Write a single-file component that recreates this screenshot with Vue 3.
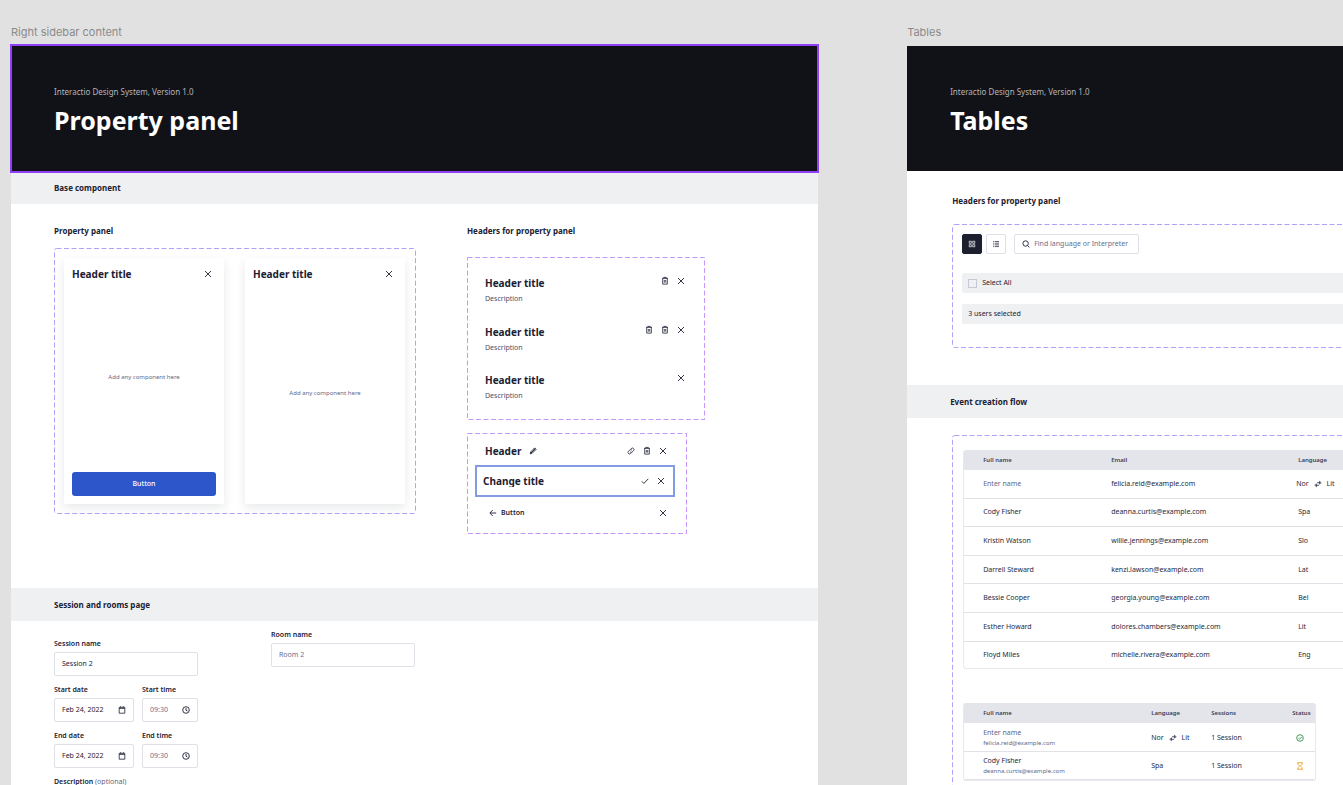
<script setup>
import { h } from 'vue'

const paths = {
  close: 'M3 3l6 6M9 3l-6 6',
  trash: 'M3 3.4h6M4.7 3.2v-.8h2.6v.8M3.7 3.6v5.5h4.6V3.6M5.3 5v2.6M6.7 5v2.6',
  pencil: 'M3.2 8.8l.5-1.9 4-4 1.4 1.4-4 4zM6.9 3.7l1.4 1.4M4 8l3.5-3.5',
  link: 'M5.5 4.3l.8-.8a1.55 1.55 0 0 1 2.2 2.2L7.3 6.9a1.55 1.55 0 0 1-2.2 0M6.5 7.7l-.8.8a1.55 1.55 0 0 1-2.2-2.2l1.2-1.2a1.55 1.55 0 0 1 2.2 0',
  check: 'M2.8 6.3l2.1 2.1 4.4-4.6',
  back: 'M9.2 6H3M5.8 3L2.8 6l3 3',
  calendar: 'M3.2 3.3h5.6v5.9H3.2zM3.2 4.4h5.6M4.6 2.2v1.2M7.4 2.2v1.2',
  clock: 'M6 2.7a3.3 3.3 0 1 0 0 6.6 3.3 3.3 0 0 0 0-6.6M6 4v2.2l1.5.8',
  grid: 'M3.2 3.2h2.1v2.1H3.2zM6.7 3.2h2.1v2.1H6.7zM3.2 6.7h2.1v2.1H3.2zM6.7 6.7h2.1v2.1H6.7z',
  list: 'M3 3.5h.9M4.7 3.5H9M3 5.2h.9M4.7 5.2H9M3 6.9h.9M4.7 6.9H9M3 8.6h.9M4.7 8.6H9',
  search: 'M5.6 2.8a2.7 2.7 0 1 0 0 5.4 2.7 2.7 0 0 0 0-5.4M7.6 7.6l1.8 1.8',
  swap: 'M5 4.7h3.2M7.4 3.3L9.2 4.7 7.4 6.1zM7 7.3H3.8M4.6 5.9L2.8 7.3l1.8 1.4z',
  approved: 'M6 2.7a3.3 3.3 0 1 0 0 6.6 3.3 3.3 0 0 0 0-6.6M4.4 6l1.2 1.2 2.2-2.3',
  pending: 'M3 2.8h6M3 9.2h6M4 2.8v1.5L5.6 6 4 7.7v1.5M8 2.8v1.5L6.4 6 8 7.7v1.5',
}

const weights = { trash: 0.8, link: 0.8, swap: 0.7, list: 0.7, grid: 0.7, calendar: 0.8 }

const Icon = ({ name }) =>
  h('svg', {
    width: 12, height: 12, viewBox: '0 0 12 12', fill: 'none', stroke: 'currentColor',
    'stroke-width': weights[name] ?? 0.9, 'stroke-linejoin': 'round', 'aria-hidden': 'true', class: 'icon',
  }, [h('path', { d: paths[name] })])
Icon.props = ['name']

const headerVariants = [['trash', 'close'], ['trash', 'trash', 'close'], ['close']]

const people = [
  { name: 'Enter name', email: 'felicia.reid@example.com', language: 'Nor', target: 'Lit', empty: true },
  { name: 'Cody Fisher', email: 'deanna.curtis@example.com', language: 'Spa' },
  { name: 'Kristin Watson', email: 'willie.jennings@example.com', language: 'Slo' },
  { name: 'Darrell Steward', email: 'kenzi.lawson@example.com', language: 'Lat' },
  { name: 'Bessie Cooper', email: 'georgia.young@example.com', language: 'Bel' },
  { name: 'Esther Howard', email: 'dolores.chambers@example.com', language: 'Lit' },
  { name: 'Floyd Miles', email: 'michelle.rivera@example.com', language: 'Eng' },
]

const sessions = people.slice(0, 2).map((p, i) => ({ ...p, sessions: '1 Session', status: i === 0 ? 'approved' : 'pending' }))

const schedule = [
  { id: 'start', label: 'Start' },
  { id: 'end', label: 'End' },
]
</script>

<template>
  <main class="canvas">
    <section class="artboard">
      <p class="artboard-name">Right sidebar content</p>
      <div class="sheet">
        <header class="cover selected">
          <p class="cover-note">Interactio Design System, Version 1.0</p>
          <h1>Property panel</h1>
        </header>

        <h2 class="band">Base component</h2>
        <div class="base">
          <div>
            <h3>Property panel</h3>
            <div class="dashed panels">
              <svg class="dashes" aria-hidden="true"><rect rx="2" /></svg>
              <article v-for="n in 2" :key="n" class="panel">
                <div class="panel-head">
                  <h4>Header title</h4>
                  <button class="icon-button" aria-label="Close"><Icon name="close" /></button>
                </div>
                <p class="panel-body">Add any component here</p>
                <button v-if="n === 1" class="primary">Button</button>
              </article>
            </div>
          </div>

          <div>
            <h3>Headers for property panel</h3>
            <div class="dashed pink headers">
              <svg class="dashes" aria-hidden="true"><rect /></svg>
              <div v-for="(icons, i) in headerVariants" :key="i" class="header-row">
                <div>
                  <h4>Header title</h4>
                  <p class="description">Description</p>
                </div>
                <div class="actions">
                  <button v-for="(icon, k) in icons" :key="k" class="icon-button" :aria-label="icon"><Icon :name="icon" /></button>
                </div>
              </div>
            </div>

            <div class="dashed pink editing">
              <svg class="dashes" aria-hidden="true"><rect /></svg>
              <div class="edit-row first">
                <h4>Header</h4>
                <button class="icon-button" aria-label="Rename"><Icon name="pencil" /></button>
                <div class="actions">
                  <button class="icon-button" aria-label="Copy link"><Icon name="link" /></button>
                  <button class="icon-button" aria-label="Delete"><Icon name="trash" /></button>
                  <button class="icon-button" aria-label="Close"><Icon name="close" /></button>
                </div>
              </div>
              <div class="edit-row rename">
                <input aria-label="Title" value="Change title" />
                <div class="actions">
                  <button class="icon-button" aria-label="Save"><Icon name="check" /></button>
                  <button class="icon-button" aria-label="Cancel"><Icon name="close" /></button>
                </div>
              </div>
              <div class="edit-row last">
                <button class="back"><Icon name="back" />Button</button>
                <div class="actions">
                  <button class="icon-button" aria-label="Close"><Icon name="close" /></button>
                </div>
              </div>
            </div>
          </div>
        </div>

        <h2 class="band">Session and rooms page</h2>
        <div class="forms">
          <form class="session">
            <div class="field">
              <label for="session-name">Session name</label>
              <div class="box"><input id="session-name" value="Session 2" /></div>
            </div>
            <div v-for="s in schedule" :key="s.id" class="pair">
              <div class="field">
                <label :for="s.id + '-date'">{{ s.label }} date</label>
                <div class="box"><input :id="s.id + '-date'" value="Feb 24, 2022" /><Icon name="calendar" /></div>
              </div>
              <div class="field">
                <label :for="s.id + '-time'">{{ s.label }} time</label>
                <div class="box"><input :id="s.id + '-time'" placeholder="09:30" /><Icon name="clock" /></div>
              </div>
            </div>
            <div class="field">
              <label for="session-description">Description <span>(optional)</span></label>
              <div class="box"><input id="session-description" /></div>
            </div>
          </form>
          <form class="room">
            <div class="field">
              <label for="room-name">Room name</label>
              <div class="box"><input id="room-name" placeholder="Room 2" /></div>
            </div>
          </form>
        </div>
      </div>
    </section>

    <section class="artboard">
      <p class="artboard-name">Tables</p>
      <div class="sheet">
        <header class="cover">
          <p class="cover-note">Interactio Design System, Version 1.0</p>
          <h1>Tables</h1>
        </header>

        <div class="toolbar-area">
          <h3>Headers for property panel</h3>
          <div class="dashed toolbar">
            <svg class="dashes" aria-hidden="true"><rect rx="2" /></svg>
            <div class="tools">
              <button class="view active" aria-label="Grid view"><Icon name="grid" /></button>
              <button class="view" aria-label="List view"><Icon name="list" /></button>
              <div class="search">
                <Icon name="search" />
                <input aria-label="Search" placeholder="Find language or Interpreter" />
              </div>
            </div>
            <label class="strip"><input type="checkbox" />Select All</label>
            <p class="strip selected-count">3 users selected</p>
          </div>
        </div>

        <h2 class="band">Event creation flow</h2>
        <div class="tables-area">
          <div class="dashed tables">
            <svg class="dashes" aria-hidden="true"><rect rx="2" /></svg>
            <table class="people">
              <colgroup><col class="c-name" /><col class="c-email" /><col /></colgroup>
              <thead>
                <tr><th>Full name</th><th>Email</th><th>Language</th></tr>
              </thead>
              <tbody>
                <tr v-for="p in people" :key="p.email">
                  <td :class="{ muted: p.empty }">{{ p.name }}</td>
                  <td>{{ p.email }}</td>
                  <td>
                    <span v-if="p.target" class="route">{{ p.language }}<Icon name="swap" />{{ p.target }}</span>
                    <template v-else>{{ p.language }}</template>
                  </td>
                </tr>
              </tbody>
            </table>

            <table class="sessions">
              <colgroup><col class="c-person" /><col class="c-lang" /><col class="c-sessions" /><col /></colgroup>
              <thead>
                <tr><th>Full name</th><th>Language</th><th>Sessions</th><th>Status</th></tr>
              </thead>
              <tbody>
                <tr v-for="p in sessions" :key="p.email">
                  <td>
                    <div class="person" :class="{ muted: p.empty }">{{ p.name }}</div>
                    <div class="person-email">{{ p.email }}</div>
                  </td>
                  <td>
                    <span v-if="p.target" class="route">{{ p.language }}<Icon name="swap" />{{ p.target }}</span>
                    <template v-else>{{ p.language }}</template>
                  </td>
                  <td>{{ p.sessions }}</td>
                  <td><span class="status" :class="p.status"><Icon :name="p.status" /></span></td>
                </tr>
              </tbody>
            </table>
          </div>
        </div>
      </div>
    </section>
  </main>
</template>

<style>
body {
  background: #e1e1e1;
}
</style>

<style scoped>
* {
  box-sizing: border-box;
  margin: 0;
  padding: 0;
}

.canvas {
  display: flex;
  gap: 89px;
  height: 100vh;
  padding: 25px 0 0 11px;
  overflow: hidden;
  background: #e1e1e1;
  color: #1b2033;
  font-family: "Noto Sans", "Open Sans", sans-serif;
  font-size: 7px;
  line-height: 12px;
}

.icon {
  display: block;
  flex: none;
}

button,
input {
  border: 0;
  background: none;
  color: inherit;
  font: inherit;
}

.artboard {
  flex: none;
  width: 60.1vw;
}

.artboard-name {
  color: #8a8a8a;
  font-family: Inter, sans-serif;
  font-size: 11px;
  line-height: 15px;
  margin-bottom: 6px;
}

.sheet {
  min-height: 100vh;
  background: #fff;
}

.cover {
  position: relative;
  padding: 40px 43px 34px;
  background: #111217;
  color: #fff;
}

.cover.selected::after {
  content: "";
  position: absolute;
  inset: -2px -1px;
  border: 2px solid #8f3ff5;
}

.cover-note {
  color: #b4b5ba;
  font-size: 8px;
}

h1 {
  margin-top: 5px;
  font-size: 25px;
  font-weight: 700;
  line-height: 34px;
}

.band {
  padding: 11px 43px 10px;
  background: #eff0f2;
  font-size: 8px;
  font-weight: 700;
}

h3 {
  font-size: 8px;
  font-weight: 700;
}

h4 {
  font-size: 10px;
  font-weight: 700;
  line-height: 16px;
}

.dashed {
  position: relative;
}

.dashes {
  position: absolute;
  inset: 0;
  width: 100%;
  height: 100%;
  pointer-events: none;
}

.dashes rect {
  x: 0.5px;
  y: 0.5px;
  width: calc(100% - 1px);
  height: calc(100% - 1px);
  fill: none;
  stroke: #b2a1fa;
  stroke-dasharray: 5 2.5;
}

.pink .dashes rect {
  stroke: #c498fb;
}

.base {
  display: flex;
  gap: 51px;
  padding: 21px 43px 54px;
}

.panels {
  display: flex;
  gap: 21px;
  margin-top: 11px;
  padding: 10px 11px 10px 10px;
}

.panel {
  display: flex;
  flex-direction: column;
  width: 160px;
  min-height: 246px;
  background: #fff;
  box-shadow: 0 4px 10px rgba(30, 36, 60, 0.1);
}

.panel-head {
  display: flex;
  align-items: center;
  justify-content: space-between;
  padding: 8px 10px 0 8px;
}

.icon-button {
  flex: none;
  width: 12px;
  height: 12px;
}

.panel-body {
  display: flex;
  flex: 1;
  align-items: center;
  justify-content: center;
  color: #5f6788;
  font-size: 6px;
}

.primary {
  height: 24px;
  margin: 0 8px 8px;
  border-radius: 3px;
  background: #2e56cb;
  color: #fff;
  font-weight: 500;
}

.actions {
  display: flex;
  gap: 4px;
  margin-left: auto;
}

.headers {
  display: flex;
  flex-direction: column;
  justify-content: space-between;
  width: 238px;
  min-height: 163px;
  margin-top: 20px;
  padding: 18px;
}

.header-row {
  display: flex;
  align-items: flex-start;
}

.description {
  margin-top: 2px;
  color: #4a5069;
}

.editing {
  width: 220px;
  margin-top: 13px;
  padding: 10px 12px 13px 8px;
}

.edit-row {
  display: flex;
  align-items: center;
}

.edit-row.first {
  gap: 6px;
  padding: 0 6px 0 10px;
}

.rename {
  height: 32px;
  margin-top: 6px;
  padding: 0 6px;
  border: 2px solid #839be0;
}

.rename input {
  width: 100px;
  font-size: 10px;
  font-weight: 700;
}

.edit-row.last {
  margin-top: 8px;
  padding: 0 6px 0 12px;
}

.back {
  display: flex;
  align-items: center;
  gap: 2px;
  height: 16px;
  font-weight: 600;
}

.forms {
  display: flex;
  gap: 73px;
  padding: 0 43px;
}

.session,
.room {
  display: flex;
  flex-direction: column;
  gap: 8px;
  width: 144px;
  padding-top: 17px;
}

.room {
  padding-top: 8px;
}

.pair {
  display: grid;
  grid-template-columns: minmax(0, 10fr) minmax(0, 7fr);
  gap: 8px;
}

.field label {
  display: block;
  margin-bottom: 2px;
  font-weight: 600;
}

.field label span {
  color: #5f6788;
  font-weight: 400;
}

.box {
  display: flex;
  align-items: center;
  height: 24px;
  padding: 0 5px 0 7px;
  border: 1px solid #dfe0e8;
  border-radius: 2px;
}

.box input {
  flex: 1;
  min-width: 0;
}

input::placeholder {
  color: #676f90;
  opacity: 1;
}

.toolbar-area {
  padding: 24px 0 37px 45px;
}

.toolbar {
  margin-top: 17px;
  padding: 10px 10px 24px;
}

.tools {
  display: flex;
  gap: 4px;
  margin-bottom: 19px;
}

.view {
  display: grid;
  place-items: center;
  width: 20px;
  height: 20px;
  border: 1px solid #dfe0e8;
  border-radius: 2px;
}

.view.active {
  border-color: #1b1f2e;
  background: #1b1f2e;
  color: #fff;
}

.search {
  display: flex;
  align-items: center;
  gap: 2px;
  width: 125px;
  height: 20px;
  margin-left: 4px;
  padding: 0 5px;
  border: 1px solid #dfe0e8;
  border-radius: 2px;
}

.search input {
  flex: 1;
  min-width: 0;
}

.strip {
  display: flex;
  align-items: center;
  gap: 5px;
  height: 20px;
  padding: 0 6px;
  border-radius: 2px;
  background: #eff0f2;
}

.strip input {
  appearance: none;
  width: 9px;
  height: 9px;
  border: 1px solid #c6c8d4;
}

.selected-count {
  margin-top: 11px;
}

.tables-area {
  padding: 17px 0 0 45px;
}

.tables {
  padding: 15px 10px 15px 11px;
}

table {
  width: 100%;
  border: 1px solid #e8e9ed;
  border-top: 0;
  border-radius: 3px;
  border-spacing: 0;
  color: #252a3e;
  table-layout: fixed;
  overflow: hidden;
}

th {
  height: 20px;
  background: #e4e5ea;
  color: #3a4059;
  font-size: 6px;
  font-weight: 600;
  text-align: left;
}

td {
  border-bottom: 1px solid #e1e2e7;
  vertical-align: middle;
}

.people tr:last-child td {
  border-bottom: 0;
}

th:first-child,
td:first-child {
  padding-left: 19px;
}

.people {
  height: 219px;
}

.c-name {
  width: 147px;
}

.c-email {
  width: 187px;
}

.sessions {
  width: 353px;
  height: 78px;
  margin-top: 34px;
}

.sessions td {
  padding-top: 2px;
}

.c-person {
  width: 187px;
}

.c-lang {
  width: 60px;
}

.c-sessions {
  width: 81px;
}

.route {
  display: flex;
  align-items: center;
  gap: 3px;
}

.people .route {
  margin-left: -2px;
}

.muted {
  color: #5f6788;
}

.person,
.person-email {
  line-height: 10px;
}

.person-email {
  color: #5f6788;
  font-size: 6px;
}

.approved {
  color: #2f9146;
}

.pending {
  color: #f0a52e;
}

.status {
  display: block;
  padding-left: 2px;
}
</style>
